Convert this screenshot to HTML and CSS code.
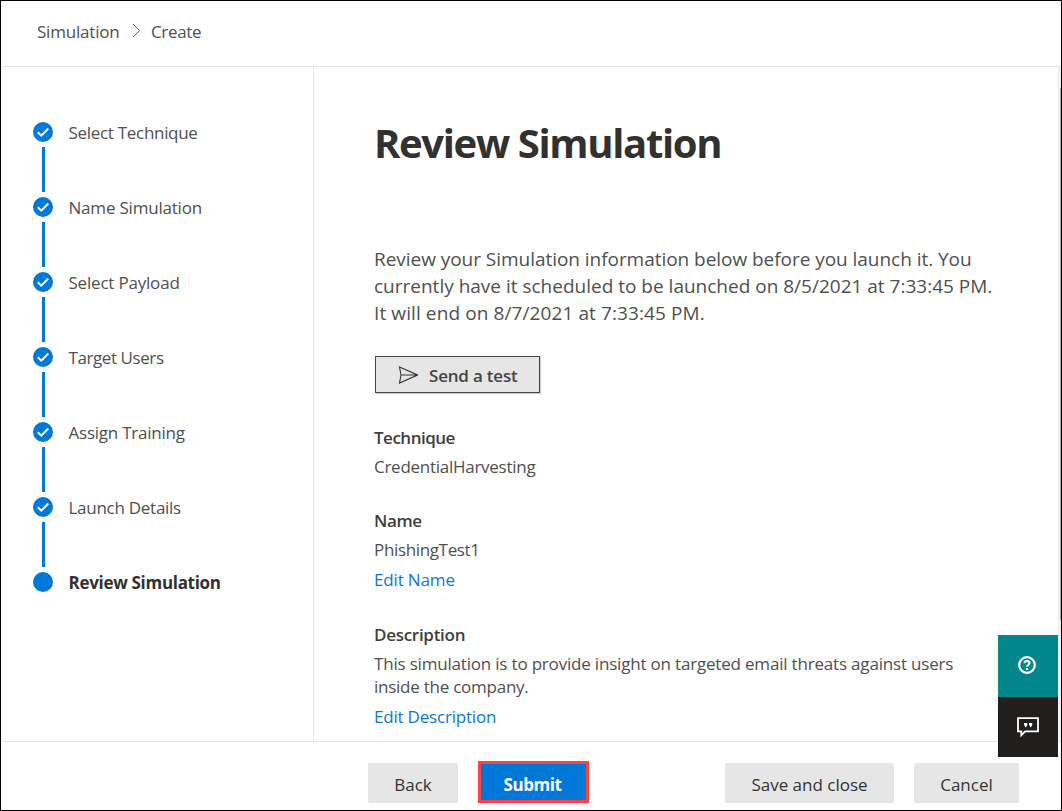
FILE: index.html
```html
<!DOCTYPE html>
<html lang="en">
<head>
<meta charset="utf-8">
<title>Review Simulation</title>
<link rel="stylesheet" href="styles.css">
</head>
<body>
<svg class="defs" width="0" height="0"><symbol id="check" viewBox="0 0 20 20"><circle cx="10" cy="10" r="10" fill="#0078d7"/><path d="M4.8 10.2 8.3 13.6 15.3 6.5" fill="none" stroke="#fff" stroke-width="2"/></symbol></svg>
<div class="app">
  <header class="breadcrumb">
    <span class="crumb">Simulation</span>
    <svg class="chevron" width="9" height="15" viewBox="0 0 9 15"><path d="M1 1 7.7 7.5 1 14" fill="none" stroke="#666" stroke-width="1"/></svg>
    <span class="crumb crumb-current">Create</span>
  </header>
  <div class="body">
    <nav class="steps">
      <div class="step"><svg class="dot"><use href="#check"/></svg><span class="s1">Select Technique</span><i class="line"></i></div>
      <div class="step"><svg class="dot"><use href="#check"/></svg><span class="s2">Name Simulation</span><i class="line"></i></div>
      <div class="step"><svg class="dot"><use href="#check"/></svg><span class="s3">Select Payload</span><i class="line"></i></div>
      <div class="step"><svg class="dot"><use href="#check"/></svg><span class="s4">Target Users</span><i class="line"></i></div>
      <div class="step"><svg class="dot"><use href="#check"/></svg><span class="s5">Assign Training</span><i class="line"></i></div>
      <div class="step"><svg class="dot"><use href="#check"/></svg><span class="s6">Launch Details</span><i class="line"></i></div>
      <div class="step current"><i class="dot dot-current"></i><span class="s7">Review Simulation</span></div>
    </nav>
    <main class="content">
      <h1>Review Simulation</h1>
      <p class="intro"><span class="i1">Review your Simulation information below before you launch it. You</span><br><span class="i2">currently have it scheduled to be launched on 8/5/2021 at 7:33:45 PM.</span><br><span class="i3">It will end on 8/7/2021 at 7:33:45 PM.</span></p>
      <button class="test"><svg width="20" height="18" viewBox="0 0 20 18"><path d="M1.5 1 19.5 9 1.5 17 3 9ZM3 9H19.5" fill="none" stroke="#333" stroke-width="1.1"/></svg><span>Send a test</span></button>
      <section class="field">
        <h2 class="h-tech">Technique</h2>
        <p class="v1">CredentialHarvesting</p>
      </section>
      <section class="field field-name">
        <h2 class="h-name">Name</h2>
        <p class="v2">PhishingTest1</p>
        <a class="l1">Edit Name</a>
      </section>
      <section class="field field-desc">
        <h2 class="h-desc">Description</h2>
        <p><span class="v3">This simulation is to provide insight on targeted email threats against users</span><br><span class="v4">inside the company.</span></p>
        <a class="l2">Edit Description</a>
      </section>
    </main>
    <div class="scrollbar"><div class="thumb"></div></div>
  </div>
  <footer class="actions">
    <button class="btn back">Back</button>
    <button class="btn submit">Submit</button>
    <button class="btn save">Save and close</button>
    <button class="btn cancel">Cancel</button>
  </footer>
  <aside class="float">
    <div class="help"><svg width="18" height="18" viewBox="0 0 18 18"><circle cx="9" cy="9" r="7.8" fill="none" stroke="#fff" stroke-width="2.2"/><path d="M6.5 7.3C6.5 5.8 7.5 5 9 5s2.5.8 2.5 2.1c0 1.6-2.4 1.7-2.4 3.7M9.1 11.9v2" fill="none" stroke="#fff" stroke-width="2"/></svg></div>
    <div class="feedback"><svg width="22" height="20" viewBox="0 0 22 20"><path d="M1 1.2H21V14.3H8.2L4.3 18.2V14.3H1Z" fill="none" stroke="#fff" stroke-width="1.8"/><path d="M7 6h3.2v2.5L8.7 10.3H8V8.6H7ZM12 6h3.2v2.5l-1.5 1.8H13V8.6h-1Z" fill="#fff"/></svg></div>
  </aside>
</div>
</body>
</html>
```
FILE: styles.css
```css
* { box-sizing: border-box; }
body { margin: 0; font-family: "Open Sans", "Noto Sans", sans-serif; color: #505050; font-size: 17px; font-weight: 400; background: #fff; }
h1, h2, p { margin: 0; }
button { font: inherit; border: 0; padding: 0; }
.defs { position: absolute; }
.app { position: relative; width: 1062px; height: 811px; border: 1px solid #000; display: flex; flex-direction: column; overflow: hidden; }
.breadcrumb { height: 66px; flex: none; border-bottom: 1px solid #e5e5e5; display: flex; align-items: center; padding: 0 0 4px 36px; white-space: nowrap; }
.crumb { width: 82px; letter-spacing: -0.2px; }
.crumb-current { width: auto; letter-spacing: -0.35px; }
.chevron { margin: 0 10px 3px 13px; }
.body { flex: 1; min-height: 0; display: flex; }
.steps { width: 313px; flex: none; border-right: 1px solid #e5e5e5; padding: 55px 0 0 32px; }
.step { height: 75px; display: grid; grid-template-columns: 20px 1fr; grid-template-rows: 20px 45px; row-gap: 5px; column-gap: 15.5px; white-space: nowrap; }
.step span { line-height: 22px; }
.s1 { letter-spacing: -0.3px; }
.s2 { letter-spacing: -0.2px; }
.s3 { letter-spacing: -0.2px; }
.s4 { letter-spacing: -0.42px; }
.s5 { letter-spacing: -0.23px; }
.s6 { letter-spacing: -0.27px; }
.s7 { letter-spacing: -0.3px; }
.dot { width: 20px; height: 20px; display: block; }
.dot-current { border-radius: 50%; background: #0078d7; }
.line { width: 3px; height: 45px; margin-left: 9px; background: #0078d7; }
.current { font-weight: 700; color: #323130; }
.content { flex: 1; padding: 51px 0 0 60px; overflow: hidden; white-space: nowrap; }
h1 { font-size: 40px; line-height: 50px; font-weight: 700; letter-spacing: -1.35px; color: #323130; }
.intro { margin-top: 78px; font-size: 19px; line-height: 27px; }
.i1 { letter-spacing: -0.04px; }
.i3 { letter-spacing: 0.1px; }
.test { margin: 29px 0 0 1px; width: 165px; height: 37px; border: 1px solid #444; background: #e6e6e6; display: flex; align-items: center; padding: 2px 0 0 22px; color: #444; font-weight: 600; letter-spacing: -0.2px; box-shadow: 1px 1px 1px #ccc; }
.test svg { margin: 0 11px 2px 0; }
.field h2 { font-size: 17px; line-height: 24px; font-weight: 600; margin-bottom: 5px; color: #3e3e3e; }
.field p { line-height: 23px; }
.field a { display: block; line-height: 22px; color: #0f78c8; margin-top: 8px; }
.h-tech { letter-spacing: -0.5px; }
.h-name { letter-spacing: -0.35px; }
.h-desc { letter-spacing: -0.28px; }
.v1 { letter-spacing: -0.27px; }
.v2 { letter-spacing: -0.35px; }
.v3 { letter-spacing: -0.19px; }
.v4 { letter-spacing: -0.25px; }
.l1 { letter-spacing: -0.15px; }
.l2 { letter-spacing: -0.2px; }
.test + .field { margin-top: 33px; }
.field + .field-name { margin-top: 31px; }
.field + .field-desc { margin-top: 32px; }
.scrollbar { width: 3px; background: #f1f1f1; display: flex; justify-content: flex-end; padding-top: 21px; }
.thumb { width: 1px; height: 532px; background: #aaa; }
.actions { height: 69px; flex: none; border-top: 1px solid #e5e5e5; display: flex; align-items: flex-start; padding: 19px 0 0 367px; }
.btn { height: 40px; margin-top: 2px; padding-top: 3px; border-radius: 2px; background: #e6e6e6; color: #333; font-weight: 500; white-space: nowrap; }
.back { width: 90px; margin-right: 20px; }
.submit { width: 111px; height: 42px; margin-top: 0; padding: 5px 2px 0 0; background: #0078d7; border: 3px solid #ff4343; border-radius: 0; color: #fff; font-weight: 700; letter-spacing: -0.45px; }
.save { width: 169px; margin: 2px 20px 0 136px; }
.cancel { width: 105px; }
.float { position: absolute; left: 997px; top: 634px; width: 60px; }
.help, .feedback { display: flex; align-items: center; justify-content: center; }
.help { height: 62px; background: #00868b; padding: 0 2px 2px 0; }
.feedback { height: 60px; background: #201f1e; }
```
